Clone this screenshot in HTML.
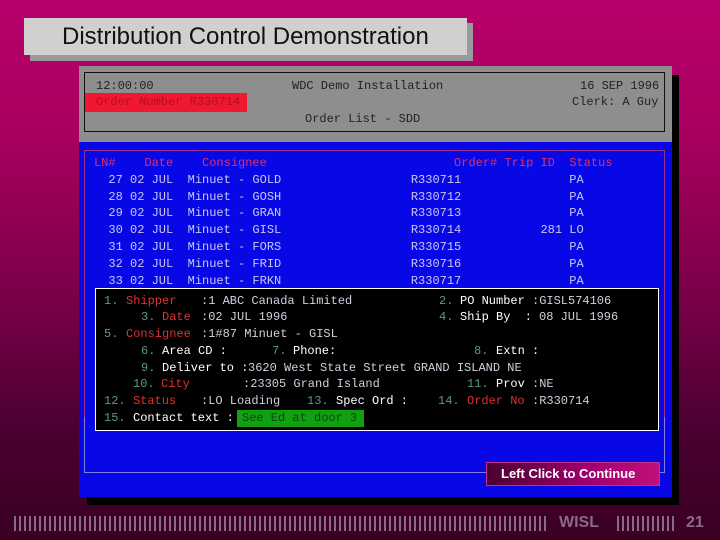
<!DOCTYPE html>
<html><head><meta charset="utf-8"><style>
*{margin:0;padding:0;box-sizing:border-box}
body{width:720px;height:540px;overflow:hidden;position:relative;background:linear-gradient(#b8006c 0%,#a8005f 25%,#7a0048 55%,#4a0030 80%,#3a0022 100%);font-family:"Liberation Mono",monospace;font-size:12px}
.a{position:absolute;white-space:pre;line-height:14px}
.m{position:absolute}
.c{color:#c8c8f0}
.h{color:#e0306a}
.n{color:#5a9a82}
.r{color:#e03030}
.w{color:#ffffff}
.v{color:#d0d0e0}
</style></head><body>
<div class="m" style="left:30px;top:23px;width:443px;height:38px;background:#9a9a9a"></div>
<div class="m" style="left:24px;top:18px;width:443px;height:37px;background:#d0d0d0"></div>
<div class="a" style="left:62px;top:23px;font-family:'Liberation Sans',sans-serif;font-size:24px;line-height:28px;color:#111">Distribution Control Demonstration</div>

<div class="m" style="left:87px;top:75px;width:592px;height:430px;background:#000"></div>
<div class="m" style="left:79px;top:66px;width:593px;height:76px;background:#8e8e8e"></div>
<div class="m" style="left:84px;top:72px;width:581px;height:60px;border:1px solid #111"></div>
<div class="m" style="left:85px;top:93px;width:162px;height:19px;background:#f01830"></div>
<div class="a" style="left:96px;top:79px;color:#222">12:00:00</div>
<div class="a" style="left:96px;top:95px;color:#b01020">Order Number R330714</div>
<div class="a" style="left:292px;top:79px;color:#222">WDC Demo Installation</div>
<div class="a" style="left:580px;top:79px;color:#222">16 SEP 1996</div>
<div class="a" style="left:572px;top:95px;color:#222">Clerk: A Guy</div>
<div class="a" style="left:305px;top:112px;color:#222">Order List - SDD</div>

<div class="m" style="left:79px;top:142px;width:593px;height:355px;background:#0808e6"></div>
<div class="m" style="left:84px;top:150px;width:581px;height:323px;border:1px solid #8080e0"></div>
<div class="m" style="left:84px;top:150px;width:581px;height:267px;border:1px solid #a03090;border-bottom:none"></div>

<div class="a h" style="left:94px;top:156px">LN#    Date    Consignee                          Order# Trip ID  Status</div>
<div class="a c" style="left:94px;top:173px">  27 02 JUL  Minuet - GOLD                  R330711               PA</div>
<div class="a c" style="left:94px;top:190px">  28 02 JUL  Minuet - GOSH                  R330712               PA</div>
<div class="a c" style="left:94px;top:206px">  29 02 JUL  Minuet - GRAN                  R330713               PA</div>
<div class="a c" style="left:94px;top:223px">  30 02 JUL  Minuet - GISL                  R330714           281 LO</div>
<div class="a c" style="left:94px;top:240px">  31 02 JUL  Minuet - FORS                  R330715               PA</div>
<div class="a c" style="left:94px;top:257px">  32 02 JUL  Minuet - FRID                  R330716               PA</div>
<div class="a c" style="left:94px;top:274px">  33 02 JUL  Minuet - FRKN                  R330717               PA</div>

<div class="m" style="left:95px;top:288px;width:564px;height:143px;background:#000;border:1px solid #fff"></div>
<div class="a n" style="left:104px;top:294px">1.</div><div class="a r" style="left:126px;top:294px">Shipper</div><div class="a v" style="left:201px;top:294px">:1 ABC Canada Limited</div>
<div class="a n" style="left:439px;top:294px">2.</div><div class="a w" style="left:460px;top:294px">PO Number</div><div class="a v" style="left:532px;top:294px">:GISL574106</div>
<div class="a n" style="left:141px;top:310px">3.</div><div class="a r" style="left:162px;top:310px">Date</div><div class="a v" style="left:201px;top:310px">:02 JUL 1996</div>
<div class="a n" style="left:439px;top:310px">4.</div><div class="a w" style="left:460px;top:310px">Ship By  :</div><div class="a v" style="left:539px;top:310px">08 JUL 1996</div>
<div class="a n" style="left:104px;top:327px">5.</div><div class="a r" style="left:126px;top:327px">Consignee</div><div class="a v" style="left:201px;top:327px">:1#87 Minuet - GISL</div>
<div class="a n" style="left:141px;top:344px">6.</div><div class="a w" style="left:162px;top:344px">Area CD :</div>
<div class="a n" style="left:272px;top:344px">7.</div><div class="a w" style="left:293px;top:344px">Phone:</div>
<div class="a n" style="left:474px;top:344px">8.</div><div class="a w" style="left:496px;top:344px">Extn :</div>
<div class="a n" style="left:141px;top:361px">9.</div><div class="a w" style="left:162px;top:361px">Deliver to :</div><div class="a v" style="left:248px;top:361px">3620 West State Street GRAND ISLAND NE</div>
<div class="a n" style="left:133px;top:377px">10.</div><div class="a r" style="left:161px;top:377px">City</div><div class="a v" style="left:243px;top:377px">:23305 Grand Island</div>
<div class="a n" style="left:467px;top:377px">11.</div><div class="a w" style="left:496px;top:377px">Prov</div><div class="a v" style="left:532px;top:377px">:NE</div>
<div class="a n" style="left:104px;top:394px">12.</div><div class="a r" style="left:133px;top:394px">Status</div><div class="a v" style="left:201px;top:394px">:LO Loading</div>
<div class="a n" style="left:307px;top:394px">13.</div><div class="a w" style="left:336px;top:394px">Spec Ord :</div>
<div class="a n" style="left:438px;top:394px">14.</div><div class="a r" style="left:467px;top:394px">Order No</div><div class="a v" style="left:532px;top:394px">:R330714</div>
<div class="a n" style="left:104px;top:411px">15.</div><div class="a w" style="left:133px;top:411px">Contact text :</div>
<div class="m" style="left:237px;top:410px;width:127px;height:17px;background:#10a010"></div>
<div class="a" style="left:242px;top:411px;color:#0a4a0a">See Ed at door 3</div>

<div class="m" style="left:486px;top:462px;width:174px;height:24px;background:linear-gradient(90deg,#4a0030,#a00070 60%,#c0107a);border:1px solid #c03090"></div>
<div class="a" style="left:501px;top:466px;font-family:'Liberation Sans',sans-serif;font-weight:bold;font-size:13px;line-height:16px;color:#fff">Left Click to Continue</div>

<div class="m" style="left:14px;top:516px;width:535px;height:15px;background:repeating-linear-gradient(90deg,#8a6a86 0 2px,transparent 2px 5px)"></div>
<div class="a" style="left:559px;top:513px;font-family:'Liberation Sans',sans-serif;font-weight:bold;font-size:16px;line-height:20px;color:#8a6a86">WISL</div>
<div class="m" style="left:617px;top:516px;width:58px;height:15px;background:repeating-linear-gradient(90deg,#8a6a86 0 2px,transparent 2px 5px)"></div>
<div class="a" style="left:686px;top:513px;font-family:'Liberation Sans',sans-serif;font-weight:bold;font-size:16px;line-height:20px;color:#8a6a86">21</div>
</body></html>
